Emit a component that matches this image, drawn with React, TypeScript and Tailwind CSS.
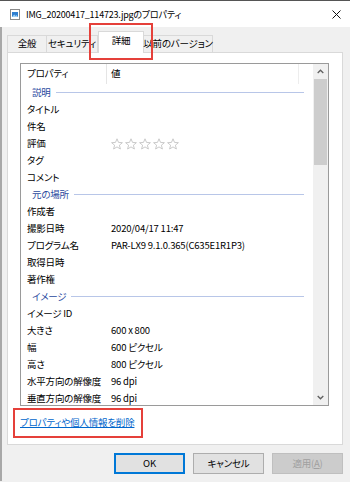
import React from 'react';

type Row =
  | { kind: 'group'; label: string }
  | { kind: 'item'; label: string; value?: string; stars?: boolean };

const rows: Row[] = [
  { kind: 'group', label: '説明' },
  { kind: 'item', label: 'タイトル' },
  { kind: 'item', label: '件名' },
  { kind: 'item', label: '評価', stars: true },
  { kind: 'item', label: 'タグ' },
  { kind: 'item', label: 'コメント' },
  { kind: 'group', label: '元の場所' },
  { kind: 'item', label: '作成者' },
  { kind: 'item', label: '撮影日時', value: '2020/04/17 11:47' },
  { kind: 'item', label: 'プログラム名', value: 'PAR-LX9 9.1.0.365(C635E1R1P3)' },
  { kind: 'item', label: '取得日時' },
  { kind: 'item', label: '著作権' },
  { kind: 'group', label: 'イメージ' },
  { kind: 'item', label: 'イメージ ID' },
  { kind: 'item', label: '大きさ', value: '600 x 800' },
  { kind: 'item', label: '幅', value: '600 ピクセル' },
  { kind: 'item', label: '高さ', value: '800 ピクセル' },
  { kind: 'item', label: '水平方向の解像度', value: '96 dpi' },
  { kind: 'item', label: '垂直方向の解像度', value: '96 dpi' },
];

function Star() {
  return (
    <svg width="12" height="12" viewBox="0 0 12 12">
      <polygon
        points="6,0.8 7.5,4.4 11.4,4.7 8.4,7.2 9.4,11 6,8.9 2.6,11 3.6,7.2 0.6,4.7 4.5,4.4"
        fill="none"
        stroke="#c4c4c4"
        strokeWidth="0.9"
        strokeLinejoin="round"
      />
    </svg>
  );
}

function FileIcon() {
  return (
    <svg width="10" height="11" viewBox="0 0 10 11">
      <rect x="0.5" y="0.5" width="9" height="10" fill="#fff" stroke="#8a8a8a" />
      <rect x="2" y="3" width="6" height="5" fill="#2f7fd0" />
      <path d="M2 8 L4.2 5.6 L5.6 7 L6.6 6 L8 8 Z" fill="#9fd0f5" />
    </svg>
  );
}

function Chevron({ down = false }: { down?: boolean }) {
  return (
    <svg width="7" height="5" viewBox="0 0 7 5">
      <path
        d={down ? 'M0.7 1 L3.5 3.8 L6.3 1' : 'M0.7 4 L3.5 1.2 L6.3 4'}
        fill="none"
        stroke="#606060"
        strokeWidth="1.3"
      />
    </svg>
  );
}

export default function App() {
  return (
    <div className='relative w-[350px] h-[482px] overflow-hidden bg-[#f0f0f0] text-[9.5px] tracking-[-0.2px] leading-none text-black font-["Noto_Sans_CJK_JP",sans-serif] [font-feature-settings:"palt"]'>
      {/* Title bar */}
      <div className="h-[27px] bg-white border-t border-[#555555] flex items-center pl-[10px] pr-[9px]">
        <FileIcon />
        <span className="ml-[6px] flex-1 whitespace-nowrap text-[9px]">IMG_20200417_114723.jpgのプロパティ</span>
        <svg width="9" height="9" viewBox="0 0 9 9">
          <path d="M0.5 0.5 L8.5 8.5 M8.5 0.5 L0.5 8.5" stroke="#111" strokeWidth="1" />
        </svg>
      </div>

      <div className="h-[454px] border-l-2 border-[#a8a8a8] pl-[5px] pr-[7px] flex flex-col">
        {/* Tabs */}
        <div className="h-[25px] flex items-end relative z-10 whitespace-nowrap">
          <div className="w-[40px] h-[17px] border border-b-0 border-[#d9d9d9] flex items-center justify-center">全般</div>
          <div className="w-[51px] h-[17px] border border-l-0 border-b-0 border-[#d9d9d9] flex items-center justify-center">セキュリティ</div>
          <div className="w-[46px] h-[22px] -mb-px bg-white border border-b-0 border-[#d9d9d9] flex items-center justify-center pb-[3px]">詳細</div>
          <div className="w-[69px] h-[17px] border border-l-0 border-b-0 border-[#d9d9d9] flex items-center justify-center">以前のバージョン</div>
        </div>

        {/* Panel */}
        <div className="h-[393px] bg-white border border-[#d9d9d9] flex flex-col">
          <div className="ml-[12px] mt-[10px] w-[309px] h-[343px] border border-[#9a9a9a] flex">
            <div className="flex-1 overflow-hidden">
              <div className="h-[20px] flex">
                <div className="w-[86px] h-full border-r border-[#e5e5e5] pl-[6px] flex items-center">プロパティ</div>
                <div className="w-[192px] h-full border-r border-[#ededed] pl-[4px] flex items-center">値</div>
              </div>
              {rows.map((r, i) =>
                r.kind === 'group' ? (
                  <div key={i} className="h-[17px] flex items-center pl-[11px] pr-[9px]">
                    <span className="text-[#2a4a9e] whitespace-nowrap">{r.label}</span>
                    <div className="flex-1 ml-[5px] h-px bg-[#b8c6e8]" />
                  </div>
                ) : (
                  <div key={i} className="h-[17px] flex items-center">
                    <div className="w-[86px] pl-[6px] whitespace-nowrap">{r.label}</div>
                    <div className="pl-[4px] whitespace-nowrap">
                      {r.stars ? (
                        <div className="flex gap-[2px]">
                          <Star />
                          <Star />
                          <Star />
                          <Star />
                          <Star />
                        </div>
                      ) : (
                        r.value
                      )}
                    </div>
                  </div>
                )
              )}
            </div>
            {/* Scrollbar */}
            <div className="w-[15px] bg-[#f0f0f0] flex flex-col">
              <div className="h-[15px] flex items-center justify-center">
                <Chevron />
              </div>
              <div className="h-[86px] mx-px bg-[#cdcdcd]" />
              <div className="flex-1" />
              <div className="h-[15px] flex items-center justify-center">
                <Chevron down />
              </div>
            </div>
          </div>

          <div className="ml-[12px] mt-[12px]">
            <span className="text-[#0066cc] underline whitespace-nowrap">プロパティや個人情報を削除</span>
          </div>
        </div>

        {/* Buttons */}
        <div className="mt-[8px] flex justify-end gap-2">
          <div className="w-[71px] h-[21px] bg-[#e1e1e1] border-2 border-[#0078d7] flex items-center justify-center">OK</div>
          <div className="w-[71px] h-[21px] bg-[#e1e1e1] border border-[#adadad] flex items-center justify-center">キャンセル</div>
          <div className="w-[71px] h-[21px] bg-[#cccccc] border border-[#bfbfbf] text-[#a0a0a0] flex items-center justify-center">
            適用(<span className="underline">A</span>)
          </div>
        </div>
      </div>

      {/* Red annotation boxes */}
      <div className="absolute left-[89px] top-[23px] w-[64px] h-[37px] border-2 border-[#e5403a] z-20" />
      <div className="absolute left-[13px] top-[408px] w-[130px] h-[30px] border-2 border-[#e5403a] z-20" />
    </div>
  );
}
